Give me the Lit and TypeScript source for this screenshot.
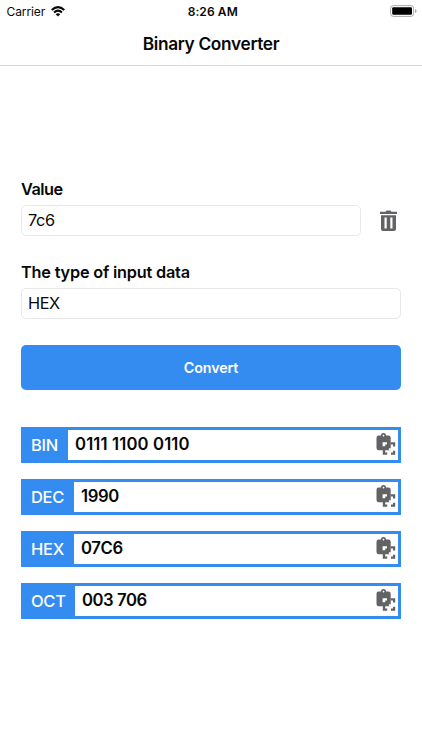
import { LitElement, html, css, svg } from "lit";
import { customElement, property } from "lit/decorators.js";

const copyIcon = svg`<svg width="20" height="23" viewBox="0 0 20 23">
  <path fill="#636366" fill-rule="evenodd" d="M2.600 2.400H4.900C5.200 .8 6 0 7.500 0S9.800 .8 10.100 2.400H12.400Q14.700 2.400 14.700 4.700V17.200H2.800Q.5 17.200 .5 14.900V4.700Q.5 2.400 2.600 2.400ZM7.500 1.800a.8.8 0 1 0 .01 0Z"/>
  <path fill="#fff" d="M6.600 9.200H11V11.400H9.200V13.300H6.600ZM12.900 15.300H14.900V17.300H12.900Z"/>
  <path fill="#636366" d="M14.600 9.300h4.600v4.100h-2.200v-2h-2.400ZM6.800 16h2.400v3.600h2v2.200H6.800ZM17 17.700h2.200v4.100h-4.200v-2.200h2Z"/>
</svg>`;

@customElement("result-row")
export class ResultRow extends LitElement {
  @property() base = "";
  @property() value = "";
  static styles = css`
    :host { display: flex; box-sizing: border-box; height: 36px; border: 3px solid #348cf0; background: #fff; }
    .base { background: #348cf0; color: #fff; font-size: 16.5px; line-height: 30px; padding: 0 4px 0 7px; flex: none; box-sizing: border-box; width: var(--w); font-weight: 500; letter-spacing: -0.3px; }
    .value { flex: 1; font-size: 16.7px; line-height: 29px; font-weight: 600; padding-left: 7px; color: #080808; white-space: nowrap; letter-spacing: var(--ls, 0); }
    .icon { width: 22px; padding-top: 3px; }
    .icon svg { display: block; overflow: visible; }
    :host([base="BIN"]) { --w: 44px; --ls: 0.13px; }
    :host([base="DEC"]), :host([base="HEX"]) { --w: 50px; --ls: -0.35px; }
    :host([base="OCT"]) { --w: 51px; --ls: -0.45px; }
  `;
  render() {
    return html`<div class="base">${this.base}</div>
      <div class="value">${this.value}</div>
      <div class="icon">${copyIcon}</div>`;
  }
}

@customElement("app-root")
export class AppRoot extends LitElement {
  private results = [
    ["BIN", "0111 1100 0110"],
    ["DEC", "1990"],
    ["HEX", "07C6"],
    ["OCT", "003 706"],
  ];
  static styles = css`
    :host { display: block; height: 750px; background: #fff; color: #080808; font-family: Inter, "Liberation Sans", sans-serif; overflow: hidden; }
    .header { height: 66px; box-sizing: border-box; border-bottom: 1px solid #d9d9d9; }
    .status { display: grid; grid-template-columns: 1fr auto 1fr; height: 22px; align-items: center; padding: 0 5px 0 6.5px; font-size: 12px; box-sizing: border-box; }
    .carrier { display: flex; align-items: center; gap: 5.5px; letter-spacing: -.1px; }
    .time { font-weight: 600; letter-spacing: .1px; padding-left: 2px; }
    .battery { justify-self: end; display: block; }
    .title { text-align: center; font-size: 17.3px; font-weight: 600; line-height: 43px; letter-spacing: -.33px; }
    .content { padding: 113px 21px 0; }
    .label { font-size: 16.3px; font-weight: 600; line-height: 21px; height: 26px; letter-spacing: -.2px; }
    .first { letter-spacing: -.5px; }
    .line { display: flex; align-items: center; }
    .field { box-sizing: border-box; height: 31px; border: 1px solid #e8e8e8; border-radius: 5px; font-size: 16.3px; line-height: 29px; padding-left: 6px; flex: 1; letter-spacing: -.4px; }
    .trash { margin: 0 4px 0 19px; display: block; }
    .second { margin-top: 26px; }
    .button { height: 45px; margin-top: 26px; border-radius: 5px; background: #348cf0; color: #fff; font-size: 14.3px; font-weight: 600; line-height: 45px; text-align: center; letter-spacing: -.15px; }
    .results { display: flex; flex-direction: column; gap: 16.2px; margin-top: 36.5px; }
  `;
  render() {
    return html`
      <div class="header">
        <div class="status">
          <div class="carrier"><span>Carrier</span>
            <svg width="14" height="11" viewBox="0 0 14 11" fill="none" stroke="#080808" stroke-width="2">
              <path d="M.7 4Q7-1.8 13.3 4M3 6.4Q7 2.8 11 6.4"/>
              <path d="M4.7 8.2Q7 6.2 9.3 8.2L7 10.5Z" fill="#080808" stroke="none"/>
            </svg>
          </div>
          <div class="time">8:26 AM</div>
          <svg class="battery" width="27" height="12" viewBox="0 0 27 12">
            <rect x=".6" y=".6" width="23" height="10.8" rx="2.7" fill="#fff" stroke="#a8a8a8"/>
            <rect x="2.2" y="2.2" width="19.8" height="7.6" rx="1.2" fill="#000"/>
            <path d="M25 4.1q1.6.5 1.6 1.9T25 7.9Z" fill="#a8a8a8"/>
          </svg>
        </div>
        <div class="title">Binary Converter</div>
      </div>
      <div class="content">
        <div class="label first">Value</div>
        <div class="line">
          <div class="field">7c6</div>
          <svg class="trash" width="17" height="22" viewBox="0 0 17 22">
            <path fill="#636366" fill-rule="evenodd" d="M0 1.800H5.500L6.500.5H10.500L11.500 1.800H17V3.900H0ZM1 5.200H16V19Q16 21 14 21H3Q1 21 1 19ZM4.500 7.400V18.400H6.700V7.400ZM10.300 7.400V18.400H12.500V7.400Z"/>
          </svg>
        </div>
        <div class="label second">The type of input data</div>
        <div class="field">HEX</div>
        <div class="button">Convert</div>
        <div class="results">
          ${this.results.map(([b, v]) => html`<result-row base=${b} .value=${v}></result-row>`)}
        </div>
      </div>`;
  }
}
